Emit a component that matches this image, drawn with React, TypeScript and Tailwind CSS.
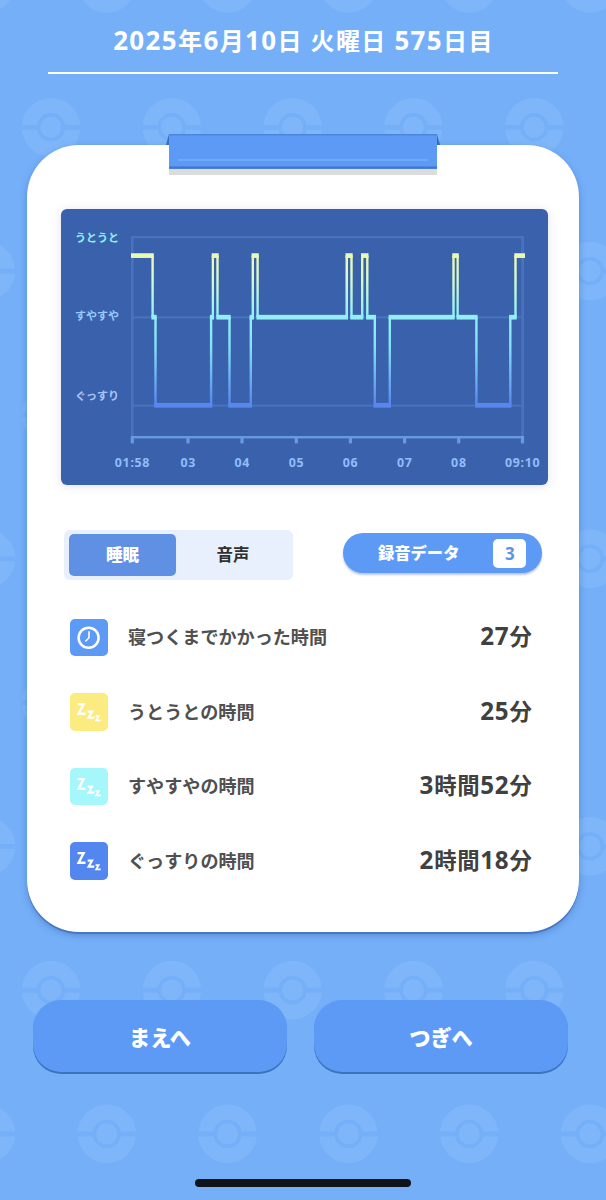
import { Fragment } from "react";
import clsx from "clsx";

type Stage = "light" | "middle" | "deep";

const STAGE_Y: Record<Stage, number> = { light: 46.6, middle: 108.2, deep: 196.3 };
const BAR = 4.7;

// [stage, start x, end x], neighbours overlap by the width of the vertical line
const SEGMENTS: [Stage, number, number][] = [
  ["light", 70, 92.8],
  ["middle", 90.4, 95.7],
  ["deep", 93.3, 151.3],
  ["middle", 148.9, 153],
  ["light", 150.7, 157.7],
  ["middle", 155.3, 169.7],
  ["deep", 167.3, 191],
  ["middle", 188.6, 193],
  ["light", 190.6, 197.8],
  ["middle", 195.4, 287],
  ["light", 284.5, 291.7],
  ["middle", 289.3, 302.4],
  ["light", 300, 307.5],
  ["middle", 305.1, 315],
  ["deep", 312.6, 330],
  ["middle", 327.6, 393.7],
  ["light", 391.3, 397.8],
  ["middle", 395.5, 416.6],
  ["deep", 414.2, 450.5],
  ["middle", 448.1, 455.7],
  ["light", 453.3, 464],
];

const TICKS = [
  { x: 71.3, label: "01:58" },
  { x: 127, label: "03" },
  { x: 181, label: "04" },
  { x: 235.3, label: "05" },
  { x: 289.4, label: "06" },
  { x: 343.6, label: "07" },
  { x: 397.7, label: "08" },
  { x: 461.5, label: "09:10" },
];

const STATS = [
  { label: "寝つくまでかかった時間", value: "27分", color: "bg-[#5c9af5]", icon: "clock" },
  { label: "うとうとの時間", value: "25分", color: "bg-[#fbeb80]", icon: "zzz" },
  { label: "すやすやの時間", value: "3時間52分", color: "bg-[#a5f7fc]", icon: "zzz" },
  { label: "ぐっすりの時間", value: "2時間18分", color: "bg-[#5387ef]", icon: "zzz" },
];

// Digits are set a little larger than the kana and kanji around them
function Mixed({ text }: { text: string }) {
  return (
    <>
      {text.split(/(\d+)/).map((part, i) => (
        <Fragment key={i}>
          {/^\d+$/.test(part) ? <span className="text-[1.08em]">{part}</span> : part}
        </Fragment>
      ))}
    </>
  );
}

function Background() {
  const balls: { x: number; y: number }[] = [];
  for (let row = 0; row < 9; row++) {
    for (let col = 0; col < 6; col++) {
      balls.push({
        x: (row % 2 === 0 ? -14 : 51) + col * 120.8,
        y: -16.5 + row * 143.8,
      });
    }
  }
  return (
    <svg className="absolute inset-0" width="606" height="1200" viewBox="0 0 606 1200">
      {balls.map(({ x, y }, i) => (
        <g key={i} transform={`translate(${x} ${y})`}>
          <circle r="29.3" fill="#7eb6f9" />
          <rect x="-29.5" y="-2.3" width="59" height="4.8" fill="#74aff7" />
          <circle r="12.4" fill="#7eb6f9" stroke="#74aff7" strokeWidth="3.6" />
        </g>
      ))}
    </svg>
  );
}

function SleepChart() {
  return (
    <svg
      className="block rounded-[6px] bg-[#3a62ac] shadow-[0_1px_8px_rgba(120,110,160,0.22)]"
      width="487"
      height="276"
      viewBox="0 0 487 276"
    >
      <defs>
        <linearGradient id="stage" gradientUnits="userSpaceOnUse" x1="0" y1="44" x2="0" y2="199">
          <stop offset="0" stopColor="#ecf9b0" />
          <stop offset="0.15" stopColor="#d9fbc8" />
          <stop offset="0.4" stopColor="#93f0f6" />
          <stop offset="0.6" stopColor="#85e2f8" />
          <stop offset="0.97" stopColor="#5887f0" />
        </linearGradient>
      </defs>

      <g fill="#4a73bf">
        <rect x="70" y="27" width="393" height="2.2" />
        <rect x="70" y="27" width="2.6" height="201" />
        <rect x="460.2" y="27" width="2.8" height="201" />
        <rect x="72" y="107.4" width="389" height="2" />
        <rect x="72" y="195.6" width="389" height="2" />
      </g>
      <g fill="#679bdd">
        <rect x="70" y="227" width="393" height="2.4" />
        {TICKS.map(({ x }) => (
          <rect key={x} x={x - 1.6} y="228" width="3.2" height="6.4" />
        ))}
      </g>

      <g fill="url(#stage)">
        {SEGMENTS.map(([stage, start, end], i) => {
          const y = STAGE_Y[stage];
          const next = SEGMENTS[i + 1];
          return (
            <Fragment key={i}>
              <rect x={start} y={y - BAR / 2} width={end - start} height={BAR} />
              {next && (
                <rect
                  x={next[1]}
                  y={Math.min(y, STAGE_Y[next[0]])}
                  width={end - next[1]}
                  height={Math.abs(STAGE_Y[next[0]] - y)}
                />
              )}
            </Fragment>
          );
        })}
      </g>

      <g fontSize="11" fontWeight="700">
        <text x="14" y="32.5" fill="#8ff0f0">うとうと</text>
        <text x="14" y="110.5" fill="#98c9fa">すやすや</text>
        <text x="14" y="190.5" fill="#abc3fa">ぐっすり</text>
      </g>
      <g fontSize="12.4" fontWeight="700" fill="#90bdf8" textAnchor="middle" letterSpacing="0.7">
        {TICKS.map(({ x, label }) => (
          <text key={x} x={x + 0.2} y="258">
            {label}
          </text>
        ))}
      </g>
    </svg>
  );
}

function ClockIcon() {
  return (
    <svg width="38" height="38" viewBox="0 0 38 38" fill="none" stroke="#fff" strokeLinecap="round">
      <circle cx="18.6" cy="18.8" r="10" strokeWidth="2.5" />
      <path d="M19 12.8v6l-3.2 3.2" strokeWidth="1.6" strokeLinejoin="round" />
    </svg>
  );
}

function ZzzIcon() {
  return (
    <svg width="38" height="38" viewBox="0 0 38 38" fill="none" stroke="#fff">
      <path d="M7.6 11.1h6L8.6 20.7h6.9" strokeWidth="2.4" />
      <path d="M17.7 18.6h4.4l-3.5 6h5.7" strokeWidth="2.1" />
      <path d="M25.6 23.1h3l-2.4 4.3h4.5" strokeWidth="1.8" />
    </svg>
  );
}

function StatRow({ label, value, color, icon }: (typeof STATS)[number]) {
  return (
    <div className="flex h-[74.5px] items-center">
      <div className={clsx("size-[37.5px] rounded-[5px]", color)}>
        {icon === "clock" ? <ClockIcon /> : <ZzzIcon />}
      </div>
      <span className="ml-[20.5px] flex-1 text-[18.1px] font-bold text-[#505050]">{label}</span>
      <span className="pb-0.5 text-[22.4px] font-bold tracking-[0.7px] text-[#404040]">
        <Mixed text={value} />
      </span>
    </div>
  );
}

function NavButton({ children }: { children: string }) {
  return (
    <button className="flex h-[72px] w-[254px] items-center justify-center rounded-[28px] bg-[#5d9af6] pt-1 text-[21.2px] font-black text-white shadow-[0_2px_0_#3b73bd]">
      {children}
    </button>
  );
}

export default function App() {
  return (
    <div className="relative h-[1200px] w-[606px] overflow-hidden bg-[#74aff8] font-['Noto_Sans','Noto_Sans_CJK_JP',sans-serif] leading-none">
      <Background />

      <div className="relative flex h-full flex-col items-center">
        {/* Date */}
        <header className="flex h-[74px] w-[510px] items-center justify-center border-b-2 border-white pt-[9px] pl-px text-[24px] font-bold tracking-[1.4px] whitespace-pre text-white">
          <Mixed text="2025年6月10日 火曜日 575日目" />
        </header>

        {/* Card */}
        <main className="relative mt-[71px] flex h-[787px] w-[552px] flex-col rounded-[52px] bg-white px-[34px] pt-16 shadow-[0_2px_0_#4577c4,0_3px_7px_rgba(50,90,160,0.45)]">
          <svg className="absolute -top-[11px] left-[139px]" width="274" height="42" viewBox="0 0 274 42">
            <path d="M3 0 0 11h3zM271 0l3 11h-3z" fill="#356fba" />
            <rect x="3" y="34" width="268" height="7" fill="#dcdcdc" />
            <rect x="3" width="268" height="35" fill="#5c9af6" />
            <rect x="3" width="268" height="1.5" fill="#4b86dd" />
            <rect x="12" y="25" width="250" height="2" fill="#72a8f9" />
            <rect x="3" y="32.5" width="268" height="2.2" fill="#4076cf" />
          </svg>

          <SleepChart />

          <div className="mt-[45px] flex items-start justify-between pr-[3px] pl-[3px]">
            <div className="flex h-[50px] w-[229px] rounded-[6px] bg-[#e8f0fe] px-[5px] py-1 text-[16.5px] font-bold">
              <button className="h-[42px] w-[107px] rounded-[5px] bg-[#6090e4] font-black text-white">睡眠</button>
              <button className="flex-1 pl-0.5 text-[#303030]">音声</button>
            </div>
            <button className="mt-[3px] flex h-[40px] w-[199px] items-center rounded-full bg-[#5d9af6] pl-[35px] text-[16.3px] font-black text-white shadow-[0_2px_2px_rgba(110,130,190,0.45)]">
              録音データ
              <span className="ml-[34px] flex h-[29px] w-[33px] items-center justify-center rounded-[5px] bg-white text-[17px] font-bold text-[#5a93e8]">
                3
              </span>
            </button>
          </div>

          <div className="mt-5 pr-[12.5px] pl-[9px]">
            {STATS.map((stat) => (
              <StatRow key={stat.label} {...stat} />
            ))}
          </div>
        </main>

        {/* Previous / next */}
        <nav className="mt-[68px] flex gap-[27px] pr-[5px]">
          <NavButton>まえへ</NavButton>
          <NavButton>つぎへ</NavButton>
        </nav>

        <div className="mt-auto mb-[13px] h-2 w-[216px] rounded-full bg-[#0e141a]" />
      </div>
    </div>
  );
}
